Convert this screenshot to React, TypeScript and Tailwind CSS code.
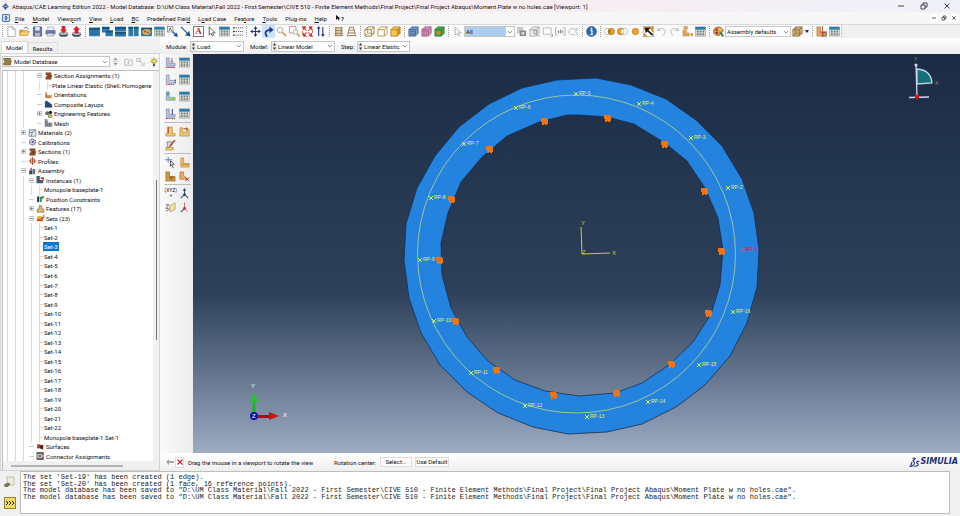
import { Fragment, useState, type ReactNode } from "react";

/* ---------- small drawing helpers ---------- */

function Ico({ children, className = "w-3 h-3" }: { children: ReactNode; className?: string }) {
  return (
    <svg viewBox="0 0 12 12" className={`${className} shrink-0`} fill="none" aria-hidden="true">
      {children}
    </svg>
  );
}

const pane = (x: number, y: number, w: number, h: number) => (
  <g key={`${x}-${y}`}>
    <rect x={x} y={y} width={w} height={h} fill="#2777a8" stroke="#7fa3bd" strokeWidth="0.5" />
    <rect x={x} y={y} width={w} height="2" fill="#14527f" />
  </g>
);

const table = (
  <>
    <rect x="0.5" y="1" width="11" height="10" fill="#e6dfc6" stroke="#8b9498" strokeWidth="0.6" />
    <rect x="0.5" y="1" width="11" height="3" fill="#2a7dab" />
    <path d="M2 5h2v2H2zM5 5h2v2H5zM8 5h2v2H8zM2 8h2v2H2zM5 8h2v2H5zM8 8h2v2H8z" fill="#6d8794" />
  </>
);

const db = (dir: "in" | "out") => (
  <>
    <ellipse cx="6" cy="9" rx="5" ry="2.8" fill="#3d4657" />
    <ellipse cx="6" cy="8" rx="5" ry="2" fill="#a9b0bd" />
    <path d={dir === "in" ? "M4 0h4v4h2L6 8 2 4h2z" : "M4 8h4V4h2L6 0 2 4h2z"} fill="#d5202a" />
  </>
);

const cube = (face: string, line: string, fill = true) => (
  <>
    <path d="M1 4l3-3h7v7l-3 3H1z" fill={fill ? face : "none"} stroke={line} strokeWidth="0.9" />
    <path d="M1 4h7v7M8 4l3-3" stroke={line} strokeWidth="0.9" />
  </>
);

const meshed = (face: string, line: string) => (
  <>
    {cube(face, line)}
    <path d="M3.3 4v7M5.6 4v7M1 6.3h7l3-3M1 8.7h7l3-3M3 4l3-3M5.5 4l3-3" stroke={line} strokeWidth="0.7" />
  </>
);

const icons: Record<string, ReactNode> = {
  new: <path d="M2 .8h5l3 2.7v8H2zM7 .8v2.7h3" fill="#fdfdfd" stroke="#8f8f8f" strokeWidth="0.7" />,
  open: (
    <>
      <path d="M.5 10V4h4l1 1h4v5z" fill="#c99336" />
      <path d="M.5 10.5l2-5h9l-2 5z" fill="#f6cf69" stroke="#b68428" strokeWidth="0.5" />
      <path d="M5.5 2.5c2-2 4-1 4.5 1" stroke="#3b5ea4" />
    </>
  ),
  save: (
    <>
      <path d="M1.5 1h9v10h-9z" fill="#6878a8" stroke="#38456f" strokeWidth="0.7" />
      <path d="M3.5 1h5v4h-5z" fill="#dfe4ee" />
      <path d="M3.5 7.5h5V11h-5z" fill="#b6bdc9" />
    </>
  ),
  print: (
    <>
      <path d="M3 1h6v4H3z" fill="#eef" stroke="#7981a3" strokeWidth="0.5" />
      <path d="M.5 4.5h11V9H.5z" fill="#6d77a0" />
      <path d="M2.5 8h7v3h-7z" fill="#dfe2ee" stroke="#5b658a" strokeWidth="0.5" />
    </>
  ),
  dbIn: db("in"),
  dbOut: db("out"),
  vp: pane(0, 2, 12, 9),
  cascade: [pane(0, 1, 8, 6), pane(4, 5, 8, 6)],
  tileH: [pane(0, 1, 12, 5), pane(0, 6.5, 12, 5)],
  tileV: [pane(0.5, 1, 5, 10), pane(6.5, 1, 5, 10)],
  vpColor: (
    <>
      {pane(0, 2, 12, 9)}
      <ellipse cx="6" cy="6.5" rx="4.5" ry="3.2" fill="#e4a552" />
      <circle cx="4.5" cy="6" r="1" fill="#b03028" />
      <circle cx="7.5" cy="7" r="1" fill="#2e7d46" />
    </>
  ),
  table,
  textArrow: (
    <>
      <rect x="0.5" y="0.5" width="6" height="6" fill="#fff" stroke="#555" strokeWidth="0.6" />
      <path d="M2 5.5L3.5 2 5 5.5" stroke="#333" strokeWidth="0.8" />
      <path d="M6 6l3 3" stroke="#1b4d9c" strokeWidth="1.2" />
      <path d="M12 12L7 10.5 10.5 7z" fill="#1b4d9c" />
    </>
  ),
  arrow: (
    <>
      <path d="M1 1l7 7" stroke="#1d4f9e" strokeWidth="1.2" />
      <path d="M11.5 11.5L5.5 10 10 5.5z" fill="#1d4f9e" />
    </>
  ),
  pointer: <path d="M3.5 1v9l2-2L7 11l1.5-1L7 7.5h3z" fill="#fff" stroke="#333" strokeWidth="0.8" />,
  list: (
    <>
      <path d="M1 2h2M1 6h2M1 10h2" stroke="#333" strokeWidth="1.5" />
      <path d="M4 2h8M4 6h8M4 10h8" stroke="#555" strokeWidth="0.9" strokeDasharray="1.5 0.7" />
    </>
  ),
  pan: (
    <>
      <path d="M6 2v8M2 6h8" stroke="#27358c" strokeWidth="1.2" />
      <path d="M6 0l2 3H4zM6 12l2-3H4zM0 6l3-2v4zM12 6L9 4v4z" fill="#27358c" />
    </>
  ),
  rotate: (
    <>
      <path d="M4.5 11.5C1 8 3 4 8 4.2" stroke="#24358e" strokeWidth="2" />
      <path d="M7 .5l4.5 3.7L7 8z" fill="#24358e" />
    </>
  ),
  zoom: (
    <>
      <circle cx="4.5" cy="4.5" r="3.2" fill="#eef0f3" stroke="#b8b2a2" />
      <path d="M7 7l4 4" stroke="#c4a05c" strokeWidth="1.8" />
    </>
  ),
  zoomBox: (
    <>
      <path d="M.5.5h7v7h-7z" stroke="#d46a62" strokeWidth="0.8" />
      <circle cx="7" cy="6.5" r="2.5" fill="#f4f4f4" stroke="#a8a39b" strokeWidth="0.8" />
      <path d="M9 8.5l2.5 3" stroke="#c08a3c" strokeWidth="1.5" />
    </>
  ),
  fit: (
    <>
      <path d="M.5.5h11v11H.5z" stroke="#cf3a30" strokeWidth="0.8" strokeDasharray="4 3" />
      <path d="M2 2l3 3M10 2L7 5M2 10l3-3M10 10L7 7" stroke="#cf3a30" strokeWidth="1.2" />
      <path d="M1 1h4L1 5zM11 1v4L7 1zM1 11V7l4 4zM11 11H7l4-4z" fill="#cf3a30" />
    </>
  ),
  cycle: (
    <>
      <path d="M4 11V2M8.5 1v9" stroke="#27358c" strokeWidth="1.2" />
      <path d="M4 0l2 3H2zM8.5 12l2-3h-4z" fill="#27358c" />
    </>
  ),
  ortho: (
    <>
      <path d="M3 1.5h7v9H3z" fill="#ded3b9" />
      <path d="M3 1v10M9.5 1v10M2 2h8.5M2 5h8.5M2 8h8.5M2 10.5h8.5" stroke="#8b6e3c" strokeWidth="0.9" />
    </>
  ),
  persp: <path d="M4 1.5h4M3 4.5h6M2 7.5h8M1 10.5h10M4 1L1.5 11M8 1l2.5 10" stroke="#8b6e3c" fill="#ded3b9" strokeWidth="0.9" />,
  wire: (
    <>
      {cube("", "#9a752d", false)}
      <path d="M4 1v7h7M4 8l-3 3" stroke="#9a752d" strokeWidth="0.7" />
    </>
  ),
  hidden: cube("#fdfbf3", "#b08a3c"),
  shaded: (
    <>
      {cube("#f3c74d", "#b3811d")}
      <path d="M8 4l3-3v7l-3 3z" fill="#c98f1e" />
    </>
  ),
  meshA: meshed("#8fb0d6", "#3a5794"),
  meshB: meshed("#b9c0e0", "#b8406f"),
  meshC: (
    <>
      {cube("#4fa548", "#2a7430")}
      <path d="M3 6h4v3H3z" fill="#e8862e" />
    </>
  ),
  pick: <path d="M3.5 1v9l2-2L7 11l1.5-1L7 7.5h3z" fill="#f8f8f8" stroke="#a4a4a4" strokeWidth="0.8" />,
  drop: (
    <>
      <path d="M1 1h7v7H1z" fill="#c9c9c9" />
      <path d="M4 5h7v6H4z" fill="#8a8a8a" />
      <path d="M6 6.5h3v3H6z" fill="#ddd" />
    </>
  ),
  grayCube: (
    <>
      {cube("#ececec", "#a5a5a5")}
      <circle cx="7" cy="6.5" r="2" stroke="#909090" />
      <path d="M8.5 8.5l3 3" stroke="#909090" />
    </>
  ),
  grayRect: (
    <>
      <path d="M1.5 2H10v7H1.5z" stroke="#a8a8a8" strokeWidth="0.8" />
      <path d="M9 11.5h3v-3z" fill="#999" />
    </>
  ),
  grayDots: (
    <>
      <path d="M.5 2v8M11 2v8M.5 2h2M9 2h2M.5 10h2M9 10h2" stroke="#999" strokeWidth="0.8" />
      <path d="M3 5h1.5v3H3zM5.5 4H7v4H5.500zM8 5h1v3H8z" fill="#888" />
    </>
  ),
  grayLasso: <path d="M1.5 9C0 5 3 1 6 3s4-1 4.5 0-3 2-2 3.5S10 9 11 10M3 9.5c2-1 3 1 5 0" stroke="#aaa" strokeWidth="0.9" />,
  info: (
    <>
      <circle cx="6" cy="6" r="5.5" fill="#2f68ad" stroke="#1f467c" strokeWidth="0.5" />
      <circle cx="6" cy="3" r="1" fill="#fff" />
      <path d="M5 5h1.5v4M4.5 9.2h3" stroke="#fff" strokeWidth="1.2" />
    </>
  ),
  venn: (
    <>
      <circle cx="4" cy="6" r="3.5" fill="#fff" stroke="#a9a39a" strokeWidth="0.7" />
      <circle cx="8" cy="6" r="3.5" fill="#f0a02c" stroke="#8f6b2c" strokeWidth="0.7" />
      <path d="M6 3.2c-2 1.6-2 4 0 5.6 2-1.6 2-4 0-5.6z" fill="#a5701c" />
    </>
  ),
  vennL: (
    <>
      <circle cx="8" cy="6" r="3.5" fill="#fff" stroke="#a9a39a" strokeWidth="0.7" />
      <circle cx="4" cy="6" r="3.5" fill="#f0a02c" stroke="#8f6b2c" strokeWidth="0.7" />
      <path d="M6 3.2c-2 1.6-2 4 0 5.6 2-1.6 2-4 0-5.6z" fill="#fff" />
    </>
  ),
  dot: <circle cx="6" cy="6" r="3.6" fill="#f0a02c" stroke="#b9832c" strokeWidth="0.7" />,
  active: (
    <>
      <path d="M0 0h12v12H0z" fill="#fff" stroke="#555" strokeWidth="0.8" />
      <path d="M1 1h10v7L8 3 1 4zM1 7l4 4.5H1z" fill="#dd8a22" />
      <path d="M4 4l6.5 6" stroke="#111" strokeWidth="1.8" />
      <path d="M2 2h6L3 8z" fill="#111" />
    </>
  ),
  undo: <path d="M2 2v3h3M2 5c2-3 8-3 8 1 0 2-1 3.5-3 4.5" stroke="#b7b7b7" />,
  redo: <path d="M10 2v3H7M10 5C8 2 2 2 2 6c0 2 1 3.5 3 4.5" stroke="#b7b7b7" />,
  parts: (
    <>
      <path d="M2 .5h4v3H2zM1 4.5h4v3h3V11H1z" fill="#dca35a" stroke="#b98a48" strokeWidth="0.5" />
      <path d="M9.5 8H12v3H9.5z" fill="#c98f45" />
    </>
  ),
  palette: (
    <>
      <path d="M.5 6C.5-.5 11-.5 11 5.5c0 2-2 1.5-3 2-1 .8.5 3-2 3C3 10.5.5 9 .5 6z" fill="#d79a50" stroke="#83582b" strokeWidth="0.7" />
      <circle cx="4" cy="4" r="1.3" fill="#c42e24" />
      <circle cx="7.5" cy="3.5" r="1.3" fill="#e6cf4a" />
      <circle cx="4" cy="7.5" r="1.3" fill="#8d2a22" />
      <path d="M8 7l3 4.5" stroke="#2d7d3c" strokeWidth="2" />
    </>
  ),
  tanCube: (
    <>
      {cube("#cfae74", "#8a6c3a")}
      <path d="M4 1v7h7M4 8l-3 3" stroke="#8a6c3a" strokeWidth="0.8" />
    </>
  ),
  csys: (
    <>
      <path d="M1 1h4v6h6v4H1z" fill="#e0a95c" stroke="#9b6c2d" strokeWidth="0.6" />
      <path d="M7 0v12M4 6.5h8" stroke="#c6302a" strokeWidth="0.9" />
      <path d="M7.5 7.5h4V11h-4z" stroke="#444" strokeWidth="0.6" />
    </>
  ),
};

/* ---------- menus and toolbar ---------- */

// label and index of the mnemonic letter
const menus: [string, number][] = [
  ["File", 0],
  ["Model", 0],
  ["Viewport", 4],
  ["View", 0],
  ["Load", 0],
  ["BC", 0],
  ["Predefined Field", 15],
  ["Load Case", 1],
  ["Feature", 3],
  ["Tools", 0],
  ["Plug-ins", 3],
  ["Help", 0],
];

const groups: string[][] = [
  ["new", "open", "save", "print", "dbIn", "dbOut"],
  ["vp", "cascade", "tileH", "tileV", "vpColor", "table", "textArrow", "arrow", "text", "pointer", "table", "list"],
  ["pan", "rotate", "zoom", "zoomBox", "fit", "cycle"],
  ["ortho", "persp"],
  ["wire", "hidden", "shaded"],
  ["meshA", "meshB", "meshC"],
  ["pick", "select:All", "drop", "grayCube", "grayRect", "grayDots", "grayLasso"],
  ["info"],
  ["venn", "vennL", "dot", "active", "undo", "redo", "parts", "table"],
  ["palette", "select:Assembly defaults", "tanCube", "caret"],
  ["csys", "table"],
];

function Chevron() {
  return (
    <svg viewBox="0 0 8 8" className="h-2 w-2 shrink-0 pointer-events-none" fill="none" aria-hidden="true">
      <path d="M2 3l2 2 2-2" stroke="#777" strokeWidth="0.8" />
    </svg>
  );
}

interface ComboProps {
  id: string;
  value: string;
  width: string;
  label?: string;
  spin?: boolean;
  blue?: boolean;
}

function Combo({ id, value, width, label, spin, blue }: ComboProps) {
  return (
    <span className={`flex items-center h-[11px] border border-[#c6c6c6] bg-white ${width}`}>
      {spin && (
        <svg viewBox="0 0 5 9" className="w-[5px] h-[9px] shrink-0 bg-[#ececec]" aria-hidden="true">
          <path d="M2.5 1L4 3.5H1zM2.5 8L4 5.5H1z" fill="#333" />
        </svg>
      )}
      <select
        id={id}
        aria-label={label}
        className={`appearance-none flex-1 min-w-0 h-full pl-px outline-none ${blue ? "bg-[#accdee]" : "bg-white"}`}
      >
        <option>{value}</option>
      </select>
      <Chevron />
    </span>
  );
}

function ToolItem({ name }: { name: string }) {
  if (name === "select:All") return <Combo id="pick-filter" label="Selection filter" value="All" width="w-[51px]" blue />;
  if (name === "select:Assembly defaults")
    return <Combo id="color-code" label="Color code" value="Assembly defaults" width="w-[66px]" />;
  if (name === "caret")
    return (
      <button aria-label="More" className="w-[6px] flex justify-center">
        <svg viewBox="0 0 4 3" className="w-1 h-[3px]">
          <path d="M0 0h4L2 3z" fill="#222" />
        </svg>
      </button>
    );
  if (name === "text")
    return (
      <button aria-label="Text" className="w-[13px] h-3 flex items-center justify-center">
        <span className="w-[11px] h-[11px] border border-[#777] bg-white text-[#c11f1f] font-['Liberation_Serif',serif] font-bold text-[9px] leading-[9px] text-center">
          A
        </span>
      </button>
    );
  return (
    <button
      aria-label={name}
      className={`w-[13px] h-[13px] flex items-center justify-center ${name === "rotate" ? "bg-[#cce4f7]" : ""}`}
    >
      <Ico className="w-[11px] h-[11px]">{icons[name]}</Ico>
    </button>
  );
}

function Grip() {
  return (
    <span className="w-[5px] h-[11px] flex justify-center shrink-0">
      <span className="border-l border-dotted border-[#9a9a9a]" />
    </span>
  );
}

function Toolbar() {
  return (
    <div className="h-[14px] shrink-0 flex bg-[#f0f0f0] border-t border-[#d9d9d9]">
      <div className="flex items-center bg-[#fafafa] border-r border-[#d0d0d0]">
        {groups.map((g, i) => (
          <div key={i} className="flex items-center">
            <Grip />
            {g.map((n, j) => (
              <ToolItem key={j} name={n} />
            ))}
          </div>
        ))}
      </div>
    </div>
  );
}

/* ---------- model tree ---------- */

type Row = { guides: string; node: "+" | "-" | "t"; icon?: string; text: string; selected?: boolean };

const sets: Row[] = Array.from({ length: 22 }, (_, i) => ({
  guides: "|||||",
  node: "t",
  text: `Set-${i + 1}`,
  selected: i === 2,
}));

const rows: Row[] = [
  { guides: "||| ", node: "-", icon: "section", text: "Section Assignments (1)" },
  { guides: "||| ||", node: "t", text: "Plate Linear Elastic (Shell, Homogene" },
  { guides: "||| ", node: "t", icon: "orient", text: "Orientations" },
  { guides: "||| ", node: "t", icon: "layup", text: "Composite Layups" },
  { guides: "||| ", node: "+", icon: "gears", text: "Engineering Features" },
  { guides: "||| ", node: "t", icon: "mesh", text: "Mesh" },
  { guides: "||", node: "+", icon: "material", text: "Materials (2)" },
  { guides: "||", node: "t", icon: "calib", text: "Calibrations" },
  { guides: "||", node: "+", icon: "section", text: "Sections (1)" },
  { guides: "||", node: "t", icon: "profile", text: "Profiles" },
  { guides: "||", node: "-", icon: "assembly", text: "Assembly" },
  { guides: "|||", node: "-", icon: "instance", text: "Instances (1)" },
  { guides: "|||||", node: "t", text: "Monopole baseplate-1" },
  { guides: "|||", node: "t", icon: "constraint", text: "Position Constraints" },
  { guides: "|||", node: "+", icon: "feature", text: "Features (17)" },
  { guides: "|||", node: "-", icon: "sets", text: "Sets (23)" },
  ...sets,
  { guides: "|||||", node: "t", text: "Monopole baseplate-1.Set-1" },
  { guides: "|||", node: "t", icon: "surface", text: "Surfaces" },
  { guides: "|||", node: "t", icon: "connector", text: "Connector Assignments" },
];

const treeIcons: Record<string, ReactNode> = {
  section: <path d="M2 1h8v3H8v3h2v4H2V7h2V4H2zM5 5h6v2H5z" fill="#9a4f22" stroke="#5b3118" strokeWidth="0.6" />,
  orient: (
    <>
      <path d="M1 2h3v4h7v5H1z" fill="#e59b4f" />
      <path d="M3 9V5M3 9h5" stroke="#8c4a1c" />
    </>
  ),
  layup: <path d="M1 2h3l7 5v4H1z" fill="#274b6f" stroke="#152536" strokeWidth="0.6" />,
  gears: (
    <>
      <circle cx="4" cy="5" r="3" fill="#6b6c5c" />
      <circle cx="9" cy="3.5" r="2.5" fill="#222" />
      <path d="M6 7h5v4H6z" fill="#c9c83c" stroke="#333" strokeWidth="0.6" />
    </>
  ),
  mesh: <path d="M1 1h3v5h7v5H1zM1 4h3M1 6h3M1 8.5h10M4 6v5M7.5 6v5" fill="#b8c0cb" stroke="#333c49" strokeWidth="0.8" />,
  material: <path d="M1 1h10v10H1zM4 11L6 4l4-2M1 5h5" fill="#dbe3ec" stroke="#4c6480" strokeWidth="0.9" />,
  calib: (
    <>
      <circle cx="6" cy="6" r="4.5" fill="#c9cfe3" stroke="#2c2e55" strokeWidth="1.4" strokeDasharray="2 1" />
      <path d="M6 6l3-2" stroke="#b02020" strokeWidth="1.3" />
      <circle cx="6" cy="6" r="1.3" fill="#2a3a8a" />
    </>
  ),
  profile: <path d="M6 0v12M0 6h12M3 3h6v6H3z" stroke="#a24431" strokeWidth="1.3" />,
  assembly: (
    <>
      <path d="M1 5h5v6H1z" fill="#39455a" />
      <path d="M6 3h4v8H7z" fill="#68727f" />
      <path d="M3 1h2v4H3z" fill="#b5392b" />
    </>
  ),
  instance: (
    <>
      <path d="M0 0h5v6h5v5H0z" fill="#44597c" />
      <path d="M6 3h4v4" stroke="#c33" strokeWidth="2" />
    </>
  ),
  constraint: (
    <>
      <path d="M1 3l3-2v9l-3 1z" fill="#222f28" />
      <path d="M5 3l6-2v4L8 6v4l-3 1z" fill="#2c9a57" />
    </>
  ),
  feature: <path d="M4 1h4v5h3v5H1V6h3z" fill="#e0ba6d" stroke="#6a5630" strokeWidth="0.8" />,
  sets: (
    <>
      <path d="M0 11l2-7h9l-2 7z" fill="#d5551f" />
      <path d="M2 3h5v4H1z" fill="#e8b93c" />
      <path d="M11 1v5" stroke="#333" />
    </>
  ),
  surface: (
    <>
      <path d="M1 2h5v6H1z" fill="#b83120" />
      <path d="M6 3h4v7L5 8z" fill="#4f1d18" />
    </>
  ),
  connector: (
    <>
      <path d="M0 0h11v12H0z" fill="#666" />
      <path d="M2 4h6v4H2zM8 6h4" stroke="#eee" strokeWidth="1.2" />
    </>
  ),
};

function TreeRow({ row }: { row: Row }) {
  return (
    <li className="flex items-stretch min-h-0 whitespace-nowrap">
      {row.guides.split("").map((g, i) => {
        // the last guide of a leaf is its own branch line
        const branch = !row.icon && i === row.guides.length - 1;
        return (
          <span key={i} className="w-2 shrink-0 flex items-center pl-1">
            {g === "|" && <span className="self-stretch w-px bg-[#dadada]" />}
            {branch && <span className="h-px w-[3px] bg-[#dadada]" />}
          </span>
        );
      })}
      {row.icon && (
        <>
          <span className="w-2 shrink-0 flex items-center justify-center">
            {row.node === "t" ? (
              <span className="h-px w-[5px] bg-[#d0d0d0]" />
            ) : (
              <svg viewBox="0 0 5 5" className="w-[5px] h-[5px]" aria-hidden="true">
                <path d="M.5.5h4v4h-4z" fill="#fff" stroke="#b8b8b8" strokeWidth="0.8" />
                <path d={row.node === "+" ? "M1 2.5h3M2.5 1v3" : "M1 2.5h3"} stroke="#666" strokeWidth="0.7" />
              </svg>
            )}
          </span>
          <span className="w-[10px] shrink-0 flex items-center justify-center">
            <Ico className="w-[9px] h-2">{treeIcons[row.icon]}</Ico>
          </span>
        </>
      )}
      <span className={`self-center px-px leading-[9px] ${row.selected ? "bg-[#0a74d1] text-white" : ""}`}>{row.text}</span>
    </li>
  );
}

function ModelPanel() {
  const [tab, setTab] = useState("Model");
  return (
    <aside className="w-[160px] shrink-0 flex flex-col bg-[#f0f0f0] pt-[3px]">
      <div role="tablist" className="flex h-3 px-px">
        {["Model", "Results"].map((t) => (
          <button
            key={t}
            role="tab"
            aria-selected={tab === t}
            onClick={() => setTab(t)}
            className={`px-1 border border-b-0 border-[#dcdcdc] ${tab === t ? "bg-white" : "bg-[#f0f0f0] mt-px"}`}
          >
            {t}
          </button>
        ))}
      </div>
      <div className="flex-1 min-h-0 flex flex-col bg-[#f7f7f7] border border-[#d4d4d4] pl-px pt-[2px]">
        <div className="flex items-center h-[11px] mb-[3px]">
          <div className="flex items-center h-[11px] w-[108px] border border-[#c6c6c6] bg-white">
            <Ico className="w-[9px] h-[9px]">
              <path d="M1 2h9v2H1zM2 5h9v2H2zM1 8h9v2.500H1z" fill="#c9a43a" stroke="#3d3210" strokeWidth="0.8" />
            </Ico>
            <select aria-label="Database" className="appearance-none bg-white flex-1 min-w-0 pl-[2px] outline-none">
              <option>Model Database</option>
            </select>
            <Chevron />
          </div>
          <div className="flex-1 flex items-center justify-between pl-px">
            <button aria-label="Sort">
              <Ico className="w-[9px] h-[9px]">
                <path d="M6 1l2.5 3h-5zM6 11l2.5-3h-5zM2 6h8" fill="#999" stroke="#aaa" strokeWidth="0.6" />
              </Ico>
            </button>
            <button aria-label="Up one level">
              <Ico className="w-[9px] h-[9px]">
                <path d="M1 3h4l1 1h5v7H1zM6 9V6M4.5 7.5L6 6l1.5 1.5" stroke="#aaa" />
              </Ico>
            </button>
            <button aria-label="Filter">
              <Ico className="w-[9px] h-[9px]">
                <path d="M1 2h5v4H1zM4 4l6 6M7 11h4V7" stroke="#b0b0b0" />
              </Ico>
            </button>
            <button aria-label="Tips">
              <Ico className="w-[10px] h-[10px]">
                <path d="M6 0v1.5M1 5h1.5M9.5 5H11M2 1.5l1 1M10 1.5l-1 1" stroke="#8e8a2a" strokeWidth="0.8" />
                <circle cx="6" cy="5" r="2.8" fill="#e6dc55" stroke="#6d6a20" strokeWidth="0.6" />
                <path d="M5 8h2v3H5z" fill="#3c3c28" />
              </Ico>
            </button>
          </div>
        </div>
        <div className="flex-1 min-h-0 flex flex-col bg-white border-l border-t border-[#bdbdbd]">
          <div className="flex-1 min-h-0 flex">
            <ul className="flex-1 min-w-0 overflow-hidden grid auto-rows-fr">
              {rows.map((r, i) => (
                <TreeRow key={i} row={r} />
              ))}
            </ul>
            <div className="w-[6px] shrink-0 bg-[#f0f0f0] flex flex-col items-center">
              <span className="h-[28%]" />
              <span className="w-px h-[41%] bg-[#777]" />
            </div>
          </div>
          <div className="h-[9px] bg-[#f0f0f0] flex items-center pl-2">
            <span className="h-[2px] w-[112px] bg-[#b4b4b4]" />
          </div>
        </div>
      </div>
    </aside>
  );
}

/* ---------- module toolbox ---------- */

const ell = (fill: string) => <path d="M1.5 1h3v6H11v3H1.5z" fill={fill} stroke="#7682a0" strokeWidth="0.7" />;

const toolIcons: Record<string, ReactNode> = {
  load: (
    <>
      {ell("#b7c2dc")}
      <path d="M7.5 1v5M6 4.5L7.5 6 9 4.5M1 11.5h10" stroke="#b43a5a" strokeWidth="0.9" />
    </>
  ),
  bc: (
    <>
      {ell("#c3cade")}
      <path d="M1 11.5h10M11.5 6v4" stroke="#b0305a" strokeWidth="1.2" strokeDasharray="1.5 1" />
    </>
  ),
  field: (
    <>
      {ell("#9fd0c9")}
      <path d="M1.5 1h3v4h-3z" fill="#5d9cbb" />
      <path d="M7 7h4v3H7z" fill="#8fd05c" />
    </>
  ),
  loadCase: (
    <>
      {ell("#b7c2dc")}
      <path d="M8 1v6" stroke="#3d4f93" strokeWidth="1.2" />
      <path d="M1 11.5h10" stroke="#a13349" strokeWidth="1.2" strokeDasharray="2 1" />
    </>
  ),
  table,
  partA: (
    <>
      <path d="M3 1h5v7h3v3H1V8h2z" fill="#ecc76e" stroke="#a37b30" strokeWidth="0.6" />
      <path d="M3.5 1v7" stroke="#c4402d" strokeWidth="1.2" />
    </>
  ),
  partB: (
    <>
      <path d="M1 2h3v5h4V4h3v7H1z" fill="#ecc76e" stroke="#a37b30" strokeWidth="0.6" />
      <path d="M5 3h4M8 1.5L9.5 3 8 4.5" stroke="#c8241c" />
    </>
  ),
  edit: (
    <>
      <path d="M1 8h8v3H1z" fill="#ecc76e" stroke="#a37b30" strokeWidth="0.6" />
      <path d="M2 2h6v3L5 8H3z" fill="#ddd" stroke="#555" strokeWidth="0.6" />
      <path d="M11 0L5 7" stroke="#b43d2c" strokeWidth="1.5" />
    </>
  ),
  datum: (
    <>
      <path d="M0 3h8M3.5 0v6" stroke="#4d78b5" strokeWidth="0.9" />
      <path d="M6 4v6l1.5-1.5L9 12M6 4l4 4H8" stroke="#222" strokeWidth="0.8" />
    </>
  ),
  block: (
    <>
      <path d="M2 1h3v6h6v4H2z" fill="#ecbb62" stroke="#a87a2a" strokeWidth="0.6" />
      <path d="M2 8h9" stroke="#c58a34" />
    </>
  ),
  blockB: (
    <>
      <path d="M1 1h4v5h6v5H1z" fill="#cf9b45" stroke="#7d581b" strokeWidth="0.6" />
      <path d="M5 6h4v3H5z" fill="#a4661e" />
    </>
  ),
  blockC: (
    <>
      <path d="M1 1h4v4l5 4H1z" fill="#e8a968" stroke="#9b6226" strokeWidth="0.6" />
      <path d="M7 7l4 4M11 7l-4 4" stroke="#b52b22" />
    </>
  ),
  axes: (
    <>
      <path d="M6 1v6M6 7l-4 4M6 7l4 4M4.5 3L6 1l1.5 2" stroke="#31577e" strokeWidth="1.1" />
      <circle cx="6" cy="7" r="1.3" fill="#2b3e59" />
    </>
  ),
  plane: (
    <>
      <path d="M5 4l6-3v7l-5 3z" fill="#f3e4a5" stroke="#8a7a3c" strokeWidth="0.6" />
      <path d="M1 3h3L1 7h3M1 10l4-2" stroke="#444" strokeWidth="0.8" />
    </>
  ),
  axesRed: (
    <>
      <path d="M6 1v6M6 7l4 4" stroke="#c22c3a" strokeDasharray="2 1" />
      <path d="M6 7l-4 4" stroke="#3058b4" strokeWidth="1.3" />
      <circle cx="6" cy="7" r="1.5" fill="#c22c3a" />
    </>
  ),
};

const toolbox: string[][] = [
  ["load", "table", "bc", "table", "field", "table", "loadCase", "table"],
  ["partA", "partB", "edit"],
  ["datum", "block", "blockB", "blockC"],
  ["xyz", "axes", "plane", "axesRed"],
];

function Toolbox() {
  return (
    <div className="w-[33px] shrink-0 bg-gradient-to-r from-[#fafafa] to-[#ececec] pl-1 pr-[2px]">
      {toolbox.map((group, i) => (
        <div
          key={i}
          className={`grid grid-cols-2 ${i > 0 ? "border-t border-[#bcbcbc] auto-rows-[14px] py-px" : "auto-rows-[17px]"}`}
        >
          {group.map((n, j) => (
            <button key={j} aria-label={n} className="flex items-center justify-center">
              {n === "xyz" ? (
                <span className="flex flex-col items-center text-[5px] leading-[5px] text-[#222]">
                  (XYZ)<span className="text-[#2369b5] font-bold">+</span>
                </span>
              ) : (
                <Ico className="w-[11px] h-[11px]">{toolIcons[n]}</Ico>
              )}
            </button>
          ))}
        </div>
      ))}
    </div>
  );
}

/* ---------- viewport ---------- */

const outer =
  "557,80 522,88 489,104 459,127 435,156 417,188 406,224 404,260 409,298 421,333 440,365 467,392 498,413 533,427 568,434 607,432 642,424 676,407 705,385 730,356 747,323 757,287 759,250 754,213 742,179 722,146 696,120 666,99 631,85 596,78";
const inner =
  "580,115 567,115 539,122 507,136 482,157 461,182 448,213 441,243 442,275 451,308 467,337 488,361 515,380 545,391 579,396 615,393 642,383 669,365 693,342 711,314 720,285 723,250 718,218 705,188 687,161 665,143 634,124 607,117";

const refPoints: [number, number][] = [
  [743, 250], [728, 188], [691, 138], [639, 104], [576, 94], [516, 108], [464, 144], [431, 198],
  [420, 260], [434, 321], [471, 373], [525, 406], [587, 417], [648, 402], [699, 365], [733, 312],
];

const supports: [number, number][] = [
  [545, 121], [608, 118], [490, 149], [665, 144], [452, 199], [705, 191], [722, 251],
  [440, 260], [456, 321], [709, 313], [497, 370], [672, 364], [554, 395], [617, 393],
];

const toPath = (pts: string) => `M${pts.split(" ").join("L")}Z`;

function Viewport() {
  return (
    <div className="flex-1 min-w-0 min-h-0 bg-linear-[180deg,#1b2b45_0%,#2b3d56_50%,#2f415a_60%,#66768f_81%,#9dabc3_100%]">
      <svg
        viewBox="193 54 767 399"
        className="w-full h-full block font-['Liberation_Sans',sans-serif]"
        role="img"
        aria-label="Base plate model"
      >
        <path d={toPath(outer) + toPath(inner)} fillRule="evenodd" fill="#2583e0" stroke="#14304f" strokeWidth="0.8" />
        <circle cx="576.5" cy="254" r="159" fill="none" stroke="#b9d78c" strokeWidth="0.8" />

        {supports.map(([x, y], i) => (
          <path
            key={i}
            d={`M${x - 4} ${y - 3}h6v1h1v5h-1v1h-2v-1h-1v1h-2v-3h-1z`}
            fill="#f07510"
            shapeRendering="crispEdges"
          />
        ))}

        {refPoints.map(([x, y], i) => (
          <Fragment key={i}>
            <path
              d={`M${x - 2} ${y - 2}l4 4M${x + 2} ${y - 2}l-4 4M${x - 1} ${y}h2`}
              stroke={i === 0 ? "#e0506c" : "#d8f04c"}
              strokeWidth="1"
            />
            <text x={x + 3} y={y + 1} fontSize="5" fill={i === 0 ? "#f0102c" : "#e2ee62"}>
              RP-{i + 1}
            </text>
          </Fragment>
        ))}

        {/* model origin */}
        <path d="M581 227l1 27 28-1" stroke="#c9c938" strokeWidth="1" fill="none" />
        <g fontSize="6" fill="#c9c938">
          <text x="581" y="225">Y</text>
          <text x="612" y="255">X</text>
          <text x="582" y="254">Z</text>
        </g>

        {/* orientation triad */}
        <path d="M252 415l1-14h2l1 14z" fill="#18b81c" />
        <path d="M254 393l4 9h-8z" fill="#1ecb22" />
        <path d="M256 415h14v3h-14z" fill="#a80f12" />
        <path d="M279 416l-10 4v-8z" fill="#c21414" />
        <circle cx="254" cy="416" r="4" fill="#1013a8" />
        <g fill="#fff">
          <text x="251" y="388" fontSize="6">Y</text>
          <text x="283" y="417" fontSize="6">X</text>
          <text x="252" y="418" fontSize="6">Z</text>
        </g>

        {/* view compass */}
        <path d="M917 69q14 1 15 14l-15 1z" fill="#15707c" stroke="#c6cfe8" strokeWidth="1.3" />
        <path d="M916 64l1 33M909 97.5l20-.5" stroke="#d4d4ee" strokeWidth="1.3" />
        <circle cx="916" cy="65" r="1.5" fill="#dcdcf4" />
        <path d="M915 95h4v4h-4z" fill="#c41616" />
        <g fontSize="5" fill="#8f9a4a">
          <text x="914" y="61">Y</text>
          <text x="935" y="85">X</text>
        </g>
      </svg>
    </div>
  );
}

/* ---------- prompt and messages ---------- */

function PromptArea() {
  return (
    <div className="h-[18px] shrink-0 flex items-center bg-gradient-to-b from-white to-[#efefef] pl-1 pr-[2px]">
      <button aria-label="Previous" className="w-[11px] flex justify-center">
        <svg viewBox="0 0 8 6" className="w-2 h-[6px]">
          <path d="M0 3l3-3v2h5v2H3v2z" fill="#a5a5a5" />
        </svg>
      </button>
      <button aria-label="Cancel" className="w-[9px] h-[11px] flex items-center justify-center border border-[#ddd] bg-white">
        <svg viewBox="0 0 6 6" className="w-[6px] h-[6px]">
          <path d="M.5.5l5 5M5.5.5l-5 5" stroke="#d0202a" strokeWidth="1.1" />
        </svg>
      </button>
      <span className="ml-1 w-[146px] whitespace-nowrap">Drag the mouse in a viewport to rotate the view</span>
      <span className="w-[46px] whitespace-nowrap">Rotation center:</span>
      <button className="w-8 h-[10px] border border-[#dcdcdc] bg-[#fdfdfd] leading-[8px]">Select...</button>
      <button className="ml-[3px] w-[34px] h-[10px] border border-[#dcdcdc] bg-[#fdfdfd] leading-[8px] whitespace-nowrap">
        Use Default
      </button>
      <span className="ml-auto flex items-center gap-px text-[#1c2f7c]">
        <svg viewBox="0 0 11 11" className="w-[11px] h-[11px]" fill="none" aria-hidden="true">
          <path
            d="M3.5 1.5c2-1 3.5-.5 2 1L3.5 4M4 4.5c3 0 1 5.5-3.5 5M3 5l-1.5 4.5M10.500 4.500c-3-.5-3.500 1-2 2s.5 3-3.500 2.800"
            stroke="#1c2f7c"
            strokeWidth="1.1"
          />
        </svg>
        <span className="font-['DejaVu_Sans',sans-serif] font-bold italic text-[8px] leading-[10px]">SIMULIA</span>
      </span>
    </div>
  );
}

const path =
  "D:\\UM Class Material\\Fall 2022 - First Semester\\CIVE 510 - Finite Element Methods\\Final Project\\Final Project Abaqus\\Moment Plate w no holes.cae";

const messages = [
  "The set 'Set-19' has been created (1 edge).",
  "The set 'Set-20' has been created (1 face, 16 reference points).",
  `The model database has been saved to "${path}".`,
  `The model database has been saved to "${path}".`,
];

function MessageArea() {
  return (
    <div className="h-[45px] shrink-0 flex bg-[#f0f0f0] pr-[10px] pb-[2px]">
      <div className="w-5 flex flex-col items-center justify-around py-px">
        <button aria-label="Message area">
          <Ico>
            <path d="M3 1h7v8H3z" fill="#ecebdc" stroke="#a5a28c" strokeWidth="0.6" />
            <path d="M0 9l4-2 2 1-2 2.5H1z" fill="#83745a" stroke="#4a4234" strokeWidth="0.5" />
          </Ico>
        </button>
        <button aria-label="Command line" className="w-3 h-3 bg-[#f3dc5c] border border-[#8f8437] flex items-center justify-center">
          <svg viewBox="0 0 10 6" className="w-[10px] h-[6px]" fill="none">
            <path d="M1 1l2 2-2 2M4 1l2 2-2 2M7 1l2 2-2 2" stroke="#222" />
          </svg>
        </button>
      </div>
      <div
        role="log"
        className="flex-1 min-w-0 overflow-hidden bg-white border border-[#bdbdbd] pl-[2px] pt-[2px] font-['Liberation_Mono',monospace] text-[7px] leading-[6px] text-[#222] whitespace-pre"
      >
        <div className="h-[26px] flex flex-col justify-between">
          {messages.map((m, i) => (
            <p key={i}>{m}</p>
          ))}
        </div>
      </div>
    </div>
  );
}

/* ---------- window ---------- */

function WindowButtons({ small }: { small?: boolean }) {
  return (
    <div className={`ml-auto flex items-center ${small ? "gap-[2px] pr-[2px]" : "gap-[15px] pr-[9px]"}`}>
      {["M1 4h6", "M1 3h4v4H1zM3 3V1h4v4H5", "M1.5 1.5l5 5M6.5 1.5l-5 5"].map((d) => (
        <button key={d} aria-label="Window control" className={small ? "bg-white" : ""}>
          <svg viewBox={small ? "-2 -2 12 12" : "0 0 8 8"} className="w-2 h-2" fill="none">
            <path d={d} stroke="#333" strokeWidth={small ? "1.2" : "0.9"} />
          </svg>
        </button>
      ))}
    </div>
  );
}

export default function App() {
  return (
    <div className="h-screen flex flex-col overflow-hidden bg-[#f0f0f0] font-['Roboto','Open_Sans',sans-serif] text-[6px] leading-[9px] text-[#111]">
      <header className="h-3 shrink-0 flex items-center gap-[3px] pl-[2px] bg-gradient-to-r from-[#f3f1f5] via-[#f8edf1] to-[#eff1f8]">
        <Ico className="w-[7px] h-[7px]">
          <path d="M6 0l3 4H3zM6 12l3-4H3zM0 6l3-2h6l3 2-3 2H3z" fill="#44598f" />
          <path d="M3 6h6" stroke="#dfe4f2" />
        </Ico>
        <h1 className="whitespace-nowrap">Abaqus/CAE Learning Edition 2022 - Model Database: {path} [Viewport: 1]</h1>
        <WindowButtons />
      </header>

      <nav className="h-3 shrink-0 flex items-center gap-2 pl-[2px] bg-[#f7f6f7]">
        <Ico className="w-2 h-2 -mr-[3px]">
          <path d="M1 1h10v10H1z" fill="#fff" stroke="#2c5ea8" strokeWidth="1.5" />
          <path d="M6 2.5L8 5H4zM6 9.5L8 7H4zM3 6h6" fill="#27437e" stroke="#27437e" strokeWidth="0.6" />
        </Ico>
        {menus.map(([label, k]) => (
          <button key={label} className="whitespace-nowrap">
            {label.slice(0, k)}
            <u>{label[k]}</u>
            {label.slice(k + 1)}
          </button>
        ))}
        <button aria-label="Context help" className="font-bold flex items-center">
          <Ico className="w-[6px] h-2">
            <path d="M2 0v10l3-3 2 4 2-1-2-3h4z" fill="#111" />
          </Ico>
          ?
        </button>
        <WindowButtons small />
      </nav>

      <Toolbar />

      <div className="flex-1 min-h-0 flex">
        <ModelPanel />
        <main className="flex-1 min-w-0 flex flex-col">
          <div className="h-4 shrink-0 flex items-center pl-[6px] bg-gradient-to-b from-white to-[#ededed]">
            <label htmlFor="module" className="w-6">Module:</label>
            <Combo id="module" value="Load" width="w-[54px]" spin />
            <label htmlFor="model" className="ml-[6px] w-[21px]">Model:</label>
            <Combo id="model" value="Linear Model" width="w-[64px]" spin />
            <label htmlFor="step" className="ml-[6px] w-4">Step:</label>
            <Combo id="step" value="Linear Elastic" width="w-[53px]" spin />
          </div>
          <div className="flex-1 min-h-0 flex">
            <Toolbox />
            <Viewport />
          </div>
          <PromptArea />
        </main>
      </div>

      <MessageArea />
    </div>
  );
}
